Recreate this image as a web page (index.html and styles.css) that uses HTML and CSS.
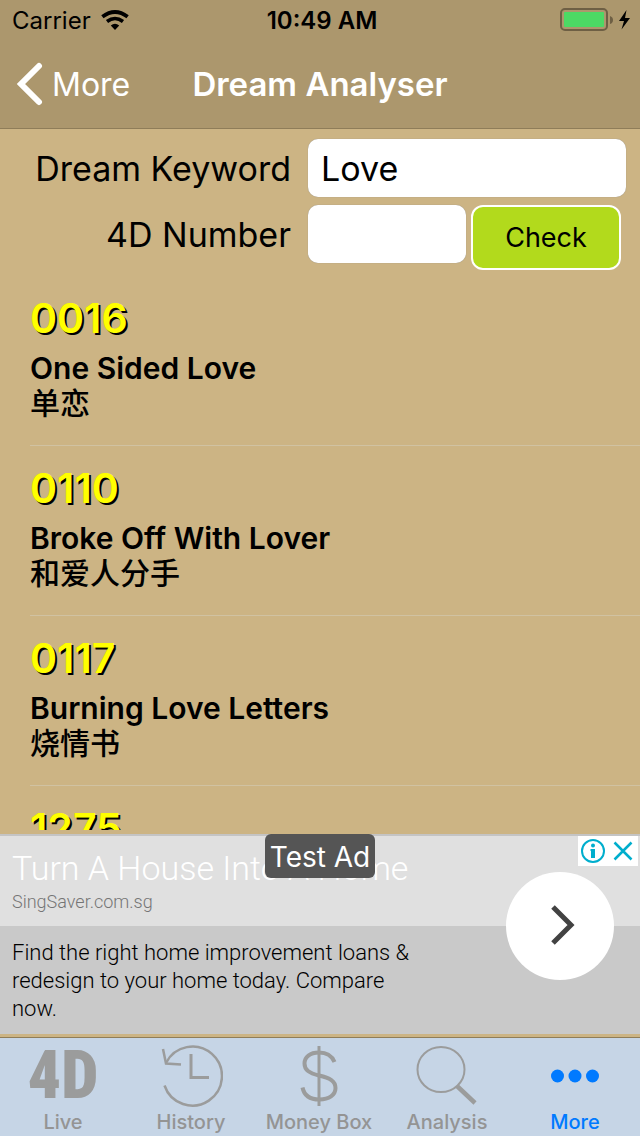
FILE: index.html
```html
<!DOCTYPE html>
<html lang="en">

<head>
    <meta charset="UTF-8">
    <meta name="viewport" content="width=device-width, initial-scale=1.0">
    <title>Dream Analyser</title>
    <link rel="stylesheet" href="styles.css">
</head>

<body>
    <div id="app">
        <header>
            <div class="status-bar">
                <div class="carrier">
                    <span>Carrier</span>
                    <svg width="28" height="20" viewBox="0 0 28 20">
                        <path d="M1.400 6.800Q14 -2.800 26.600 6.800" fill="none" stroke="#000" stroke-width="3.800" />
                        <path d="M6 11.500Q14 5.500 22 11.500" fill="none" stroke="#000" stroke-width="3.600" />
                        <path d="M9.800 15.500Q14 12 18.200 15.500L14 20Z" />
                    </svg>
                </div>
                <span class="clock">10:49 AM</span>
                <svg class="battery" width="72" height="24" viewBox="0 0 72 24">
                    <rect x="1" y="1" width="46" height="21" rx="4" fill="none" stroke="#6e5f44" stroke-width="2" />
                    <rect x="4" y="4" width="40" height="15" rx="1" fill="#4cd964" />
                    <path d="M50 8Q53 9 53 12T50 16Z" fill="#6e5f44" />
                    <path d="M66.500 2L59 13H64L61.500 21.500L70 10H65Z" />
                </svg>
            </div>
            <div class="nav-bar">
                <a class="back" href="#more">
                    <svg width="28" height="44" viewBox="0 0 28 44">
                        <path d="M23 4L5 22L23 40" fill="none" stroke="#fff" stroke-width="6" stroke-linecap="round" />
                    </svg>
                    More
                </a>
                <h1>Dream Analyser</h1>
            </div>
        </header>

        <main>
            <form id="dreamForm">
                <label for="keyword">Dream Keyword</label>
                <input type="text" id="keyword" value="Love">
                <label for="number">4D Number</label>
                <div class="number-row">
                    <input type="text" id="number">
                    <button type="submit">Check</button>
                </div>
            </form>
            <ul class="results">
                <li>
                    <h2>0016</h2>
                    <p>One Sided Love</p>
                    <p lang="zh-CN">单恋</p>
                </li>
                <li>
                    <h2>0110</h2>
                    <p>Broke Off With Lover</p>
                    <p lang="zh-CN">和爱人分手</p>
                </li>
                <li>
                    <h2>0117</h2>
                    <p>Burning Love Letters</p>
                    <p lang="zh-CN">烧情书</p>
                </li>
                <li>
                    <h2>1275</h2>
                </li>
            </ul>
        </main>

        <aside class="ad">
            <div class="ad-head">
                <h3>Turn A House Into A Home</h3>
                <p>SingSaver.com.sg</p>
            </div>
            <p class="ad-text">Find the right home improvement loans &amp; redesign to your home today. Compare now.</p>
            <span class="ad-label">Test Ad</span>
            <div class="ad-choices">
                <button type="button" aria-label="About this ad">
                    <svg width="30" height="30" viewBox="0 0 30 30">
                        <circle cx="15" cy="15" r="11" fill="none" stroke="#00aecd" stroke-width="2" />
                        <circle cx="15" cy="9.500" r="2" fill="#00aecd" />
                        <path d="M12.500 13H17V22H13V15H12.500Z" fill="#00aecd" />
                    </svg>
                </button>
                <button type="button" aria-label="Close ad">
                    <svg width="30" height="30" viewBox="0 0 30 30">
                        <path d="M6.500 6.500L23.500 23.500M23.500 6.500L6.500 23.500" stroke="#00aecd" stroke-width="2.500" />
                    </svg>
                </button>
            </div>
            <a class="ad-open" href="#ad" aria-label="Open ad">
                <svg width="28" height="42" viewBox="0 0 28 42">
                    <path d="M4 2L22 20L4 38" fill="none" stroke="#424242" stroke-width="5" />
                </svg>
            </a>
        </aside>

        <nav class="tabs">
            <a href="#live">
                <span class="logo">4D</span>
                Live
            </a>
            <a href="#history">
                <svg width="64" height="64" viewBox="0 0 64 64">
                    <path d="M7 19A29.500 29.500 0 1 1 5.500 41.500" stroke-width="2.500" />
                    <path d="M4 5L7 19.500L22 20.500" stroke-width="2.500" />
                    <path d="M32 10V33.500H50" stroke-width="3" />
                </svg>
                History
            </a>
            <a href="#moneybox">
                <svg width="64" height="64" viewBox="0 0 64 64">
                    <path d="M32 2V62" stroke-width="3" />
                    <path d="M47.500 18C45 12 40 8.500 32 8.500C23 8.500 17.500 13 17.500 19.500C17.500 26 22 29 32 31.500C43 34 48.500 37 48.500 44C48.500 51 42 55.500 32.500 55.500C23 55.500 17 51 15.500 43.500" stroke-width="4" />
                </svg>
                Money Box
            </a>
            <a href="#analysis">
                <svg width="64" height="64" viewBox="0 0 64 64">
                    <ellipse cx="26" cy="25.500" rx="23.500" ry="22.500" />
                    <path d="M42 42L60 59" stroke-width="4.500" />
                </svg>
                Analysis
            </a>
            <a href="#more" class="active">
                <svg width="64" height="64" viewBox="0 0 64 64">
                    <circle cx="14.500" cy="32" r="6.500" />
                    <circle cx="32" cy="32" r="6.500" />
                    <circle cx="49.500" cy="32" r="6.500" />
                </svg>
                More
            </a>
        </nav>
    </div>
</body>

</html>
```
FILE: styles.css
```css
* {
    box-sizing: border-box;
}

body {
    margin: 0;
    font-family: Inter, "Noto Sans CJK SC", sans-serif;
    color: #000;
    background-color: #ccb484;
}

h1,
h2,
h3,
p,
ul {
    margin: 0;
    padding: 0;
}

a {
    text-decoration: none;
}

svg {
    display: block;
}

button {
    cursor: pointer;
}

#app {
    display: flex;
    flex-direction: column;
    height: 100vh;
}

header {
    background-color: #ac976d;
    border-bottom: 1px solid #8f7d59;
}

.status-bar {
    display: grid;
    grid-template-columns: 1fr auto 1fr;
    align-items: center;
    height: 40px;
    padding: 0 8px 0 12px;
    font-size: 24px;
}

.carrier {
    display: flex;
    align-items: center;
    gap: 10px;
}

.clock {
    font-weight: 600;
}

.battery {
    justify-self: end;
}

.nav-bar {
    display: grid;
    grid-template-columns: 1fr auto 1fr;
    align-items: center;
    height: 88px;
    padding: 0 16px;
    color: #fff;
}

.back {
    display: flex;
    align-items: center;
    gap: 8px;
    font-size: 32px;
    color: #fff;
}

h1 {
    font-size: 33px;
    font-weight: 600;
}

main {
    flex: 1;
    display: flex;
    flex-direction: column;
    min-height: 0;
    margin-bottom: 4px;
    overflow: hidden;
}

form {
    display: grid;
    grid-template-columns: 277px 1fr;
    gap: 8px 17px;
    padding: 10px 14px 6px;
}

label {
    height: 58px;
    font-size: 34px;
    line-height: 60px;
    text-align: right;
    white-space: nowrap;
}

input {
    width: 100%;
    height: 58px;
    padding: 0 13px;
    font-family: inherit;
    font-size: 34px;
    border: none;
    border-radius: 10px;
    box-shadow: 0 0 1px #888;
}

.number-row {
    display: flex;
    gap: 5px;
}

.number-row input {
    width: 158px;
}

.number-row button {
    width: 150px;
    height: 65px;
    font-family: inherit;
    font-size: 27px;
    color: #000;
    background-color: #b2da1c;
    border: 2px solid #fff;
    border-radius: 12px;
}

.results {
    list-style: none;
}

.results li {
    height: 170px;
    margin-left: 30px;
    padding-top: 18px;
    border-bottom: 1px solid #d0c2a2;
}

.results h2 {
    margin-bottom: 9px;
    font-size: 41px;
    font-weight: 600;
    line-height: 48px;
    color: #ff0;
    text-shadow: 2px 2px 0 #000;
}

.results p {
    font-size: 30px;
    font-weight: 600;
    line-height: 35px;
}

.results p:lang(zh-CN) {
    font-weight: 500;
}

.ad {
    position: relative;
    height: 200px;
    margin-bottom: 3px;
    font-family: Roboto, sans-serif;
    font-weight: 300;
    background-color: #c9c9c9;
    border-top: 2px solid #c4c4c4;
}

.ad-head {
    height: 90px;
    padding: 10px 12px;
    background-color: #e0e0e0;
}

.ad-head h3 {
    font-size: 34px;
    font-weight: 300;
    line-height: 44px;
    color: #fff;
}

.ad-head p {
    font-size: 18px;
    line-height: 24px;
    color: #757575;
}

.ad-text {
    max-width: 430px;
    padding: 13px 12px;
    font-size: 22px;
    line-height: 28px;
}

.ad-label {
    position: absolute;
    top: -2px;
    left: 50%;
    width: 110px;
    height: 44px;
    font-family: Inter, sans-serif;
    font-size: 28px;
    font-weight: 400;
    line-height: 46px;
    text-align: center;
    white-space: nowrap;
    color: #fff;
    background-color: #555;
    border-radius: 6px;
    transform: translateX(-50%);
}

.ad-choices {
    position: absolute;
    top: 0;
    right: 2px;
    display: flex;
    background-color: #fff;
}

.ad-choices button {
    padding: 0;
    background: none;
    border: none;
}

.ad-open {
    position: absolute;
    top: 36px;
    right: 26px;
    display: flex;
    justify-content: center;
    align-items: center;
    width: 108px;
    height: 108px;
    padding-left: 6px;
    background-color: #fff;
    border-radius: 50%;
}

.tabs {
    display: grid;
    grid-template-columns: repeat(5, 1fr);
    height: 99px;
    padding-top: 6px;
    background-color: #c6d5e6;
    border-top: 1px solid #8f7d59;
}

.tabs a {
    display: flex;
    flex-direction: column;
    align-items: center;
    padding-right: 2px;
    font-size: 20px;
    font-weight: 500;
    line-height: 28px;
    white-space: nowrap;
    color: #949494;
}

.tabs svg {
    fill: none;
    stroke: #9b9c9c;
    stroke-width: 2;
}

.logo {
    height: 64px;
    font-family: "Roboto Condensed", Roboto, sans-serif;
    font-size: 66px;
    font-weight: 900;
    line-height: 64px;
    color: #9b9c9c;
}

.tabs .active {
    color: #007aff;
}

.tabs .active svg {
    fill: #007aff;
    stroke: none;
}
```
